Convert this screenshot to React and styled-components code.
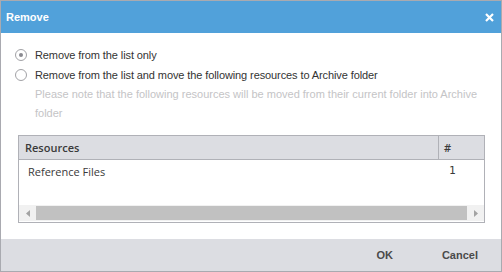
import styled, { createGlobalStyle } from 'styled-components';

const GlobalStyle = createGlobalStyle`
  html, body {
    margin: 0;
    padding: 0;
    background: #ffffff;
  }
  body {
    font-family: "Liberation Sans", Arial, sans-serif;
  }
`;

const Dialog = styled.div`
  width: 502px;
  height: 272px;
  box-sizing: border-box;
  border: 1px solid #a9aab0;
  display: flex;
  flex-direction: column;
  background: #ffffff;
`;

const Header = styled.div`
  height: 32px;
  flex: none;
  background: #51a1da;
  display: flex;
  align-items: center;
  justify-content: space-between;
  padding: 0 7px 0 5px;
`;

const Title = styled.span`
  color: #ffffff;
  font-weight: bold;
  font-size: 11px;
`;

const CloseButton = styled.button`
  border: 0;
  background: none;
  padding: 0;
  width: 9px;
  height: 9px;
  display: flex;
  cursor: pointer;
`;

const Body = styled.div`
  flex: 1;
  padding: 12px 16px 0 14px;
  display: flex;
  flex-direction: column;
`;

const RadioRow = styled.label`
  display: flex;
  align-items: center;
  gap: 8px;
  height: 20px;
  font-size: 11px;
  letter-spacing: -0.1px;
  color: #333333;
`;

const RadioCircle = styled.span`
  width: 12px;
  height: 12px;
  box-sizing: border-box;
  border-radius: 50%;
  border: 1px solid #a2a2a6;
  background: #ffffff;
  display: flex;
  align-items: center;
  justify-content: center;

  &::after {
    content: '';
    width: 4px;
    height: 4px;
    border-radius: 50%;
    background: ${({ $checked }) => ($checked ? '#8a8a90' : 'transparent')};
  }
`;

const Note = styled.p`
  margin: 0 0 0 20px;
  font-size: 11px;
  line-height: 19px;
  color: #c4c4c6;
`;

const Table = styled.div`
  margin: 12px 0 0 3px;
  height: 88px;
  box-sizing: border-box;
  border: 1px solid #b0b1b7;
  display: flex;
  flex-direction: column;
`;

const HeadRow = styled.div`
  height: 23px;
  flex: none;
  background: #dcdde2;
  border-bottom: 1px solid #b0b1b7;
  display: grid;
  grid-template-columns: 1fr 46px;
`;

const HeadCell = styled.div`
  display: flex;
  align-items: center;
  padding-left: ${({ $narrow }) => ($narrow ? '5px' : '6px')};
  font-family: "Open Sans", "Noto Sans", sans-serif;
  font-size: 11px;
  font-weight: 600;
  color: #3a3a3a;
  border-left: ${({ $narrow }) => ($narrow ? '1px solid #b0b1b7' : 'none')};
`;

const DataRow = styled.div`
  flex: 1;
  display: grid;
  grid-template-columns: 1fr 46px;
  align-items: start;
`;

const DataCell = styled.div`
  padding: 4px 0 0 ${({ $num }) => ($num ? '11px' : '9px')};
  font-family: ${({ $num }) => ($num ? '"DejaVu Sans Mono", monospace' : '"Open Sans", "Noto Sans", sans-serif')};
  font-size: 11px;
  color: #3a3a3a;
`;

const ScrollBar = styled.div`
  height: 16px;
  flex: none;
  background: #f1f1f1;
  display: flex;
  align-items: center;
  margin-bottom: 1px;
`;

const ScrollArrow = styled.span`
  width: 17px;
  display: flex;
  justify-content: center;
  align-items: center;
`;

const ScrollThumb = styled.div`
  flex: 1;
  height: 14px;
  background: #c1c1c1;
`;

const Footer = styled.div`
  height: 32px;
  flex: none;
  background: #dcdde2;
  display: flex;
  align-items: center;
  justify-content: flex-end;
  gap: 49px;
  padding-right: 23px;
`;

const FooterButton = styled.button`
  border: 0;
  background: none;
  padding: 0;
  font-family: "Liberation Sans", Arial, sans-serif;
  font-weight: bold;
  font-size: 11px;
  color: #4a4a4a;
  cursor: pointer;
`;

const Arrow = ({ dir }) => (
  <svg width="4" height="7" viewBox="0 0 4 7">
    <path d={dir === 'left' ? 'M4 0 L0 3.5 L4 7 Z' : 'M0 0 L4 3.5 L0 7 Z'} fill="#a3a3a3" />
  </svg>
);

export default function App() {
  return (
    <>
      <GlobalStyle />
      <Dialog>
        <Header>
          <Title>Remove</Title>
          <CloseButton aria-label="Close">
            <svg width="9" height="9" viewBox="0 0 9 9">
              <path d="M1 1 L8 8 M8 1 L1 8" stroke="#ffffff" strokeWidth="2.2" />
            </svg>
          </CloseButton>
        </Header>
        <Body>
          <RadioRow>
            <RadioCircle $checked />
            Remove from the list only
          </RadioRow>
          <RadioRow>
            <RadioCircle />
            Remove from the list and move the following resources to Archive folder
          </RadioRow>
          <Note>
            Please note that the following resources will be moved from their current folder into Archive folder
          </Note>
          <Table>
            <HeadRow>
              <HeadCell>Resources</HeadCell>
              <HeadCell $narrow>#</HeadCell>
            </HeadRow>
            <DataRow>
              <DataCell>Reference Files</DataCell>
              <DataCell $num>1</DataCell>
            </DataRow>
            <ScrollBar>
              <ScrollArrow><Arrow dir="left" /></ScrollArrow>
              <ScrollThumb />
              <ScrollArrow><Arrow dir="right" /></ScrollArrow>
            </ScrollBar>
          </Table>
        </Body>
        <Footer>
          <FooterButton>OK</FooterButton>
          <FooterButton>Cancel</FooterButton>
        </Footer>
      </Dialog>
    </>
  );
}
